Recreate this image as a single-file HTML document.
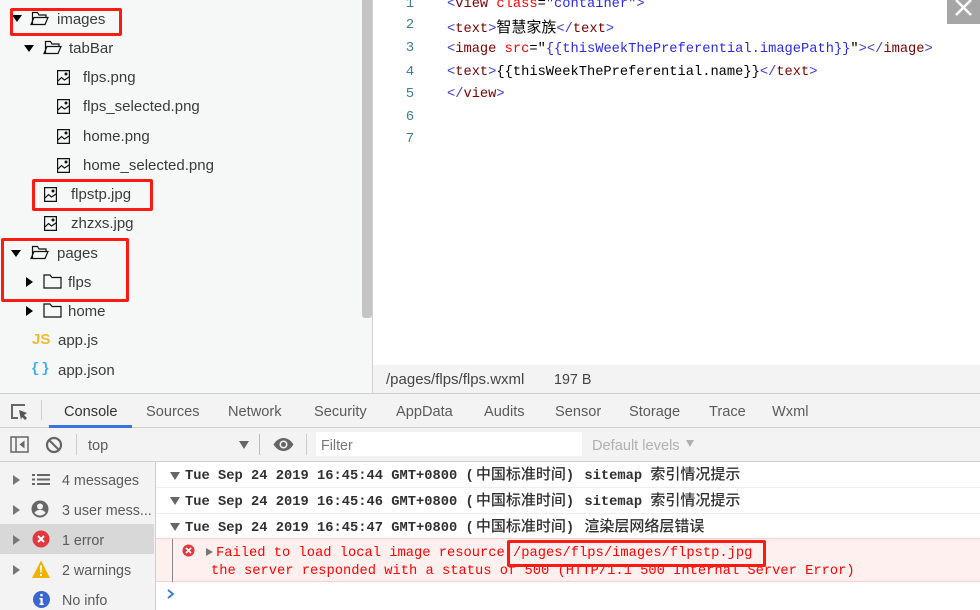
<!DOCTYPE html>
<html><head><meta charset="utf-8">
<style>
html,body{margin:0;padding:0}
body{width:980px;height:610px;position:relative;overflow:hidden;background:#fff;font-family:"Liberation Sans","Noto Sans CJK SC",sans-serif;color:#333}
.a{position:absolute}
.t{position:absolute;white-space:nowrap;font-size:15px;line-height:18px;color:#3a3a3a;margin-top:1px}
.tri{position:absolute;width:0;height:0}
.down{border-left:5.5px solid transparent;border-right:5.5px solid transparent;border-top:7px solid #000}
.right{border-top:5px solid transparent;border-bottom:5px solid transparent;border-left:7px solid #000}
.red{position:absolute;box-sizing:border-box;border:3px solid #fb1b12;border-radius:2px}
.c{position:absolute;white-space:pre;font-family:"Liberation Mono",monospace;font-size:13.72px;line-height:18px;height:18px;color:#7b0000}
.c .b{color:#3b3bd6}.c .r{color:#f00}.c .k{color:#000}.c .u{color:#2a2ae8}
.n{position:absolute;left:400px;width:20px;text-align:center;font-family:"Liberation Mono",monospace;font-size:14px;line-height:18px;color:#3f7f90}
.tab{position:absolute;top:403px;font-size:14.6px;line-height:18px;color:#5a5a5a;white-space:nowrap}
.l{position:absolute;white-space:nowrap;font-size:14.3px;line-height:18px;color:#5a5a5a;left:62px;margin-top:1px}
.g{position:absolute;left:13px;width:0;height:0;border-top:5px solid transparent;border-bottom:5px solid transparent;border-left:7px solid #777}
.m{position:absolute;left:185px;white-space:pre;font-family:"Liberation Mono","Noto Sans CJK SC",monospace;font-size:13.75px;line-height:18px;height:18px;font-weight:bold;color:#303030}
.m i{font-family:"Liberation Sans","Noto Sans CJK SC",sans-serif;font-style:normal;font-weight:500;font-size:15px}
.m i.f{margin-left:2px;margin-right:0}
.m b.p{margin-right:2px}
.d{position:absolute;left:170px;width:0;height:0;border-left:5px solid transparent;border-right:5px solid transparent;border-top:8px solid #666}
.e{position:absolute;white-space:pre;font-family:"Liberation Mono",monospace;font-size:13.75px;line-height:18px;color:#f00}
.hr{position:absolute;left:156px;right:0;height:1px;background:#eee}
.img{position:absolute}
</style></head><body>

<!-- left file tree -->
<div class="a" style="left:0;top:0;width:373px;height:393px;background:#f6f8f8"></div>
<div class="a" style="left:362px;top:0;width:10px;height:318px;background:#c4c4c4;border-radius:0 0 3px 3px"></div>
<div class="a" style="left:372px;top:0;width:1px;height:393px;background:#d0d0d0"></div>

<div class="tri down" style="left:12px;top:15px"></div>
<svg class="a" style="left:30px;top:11px" width="20" height="15" fill="none" stroke="#111" stroke-width="1.2"><path d="M2.5 13.5V1.5h5l1.5 2.5h7v2.5M1 13.5h14l3-7H4z"/></svg>
<div class="t" style="left:57px;top:10px">images</div>

<div class="tri down" style="left:24px;top:45px"></div>
<svg class="a" style="left:43px;top:40px" width="20" height="15" fill="none" stroke="#111" stroke-width="1.2"><path d="M2.5 13.5V1.5h5l1.5 2.5h7v2.5M1 13.5h14l3-7H4z"/></svg>
<div class="t" style="left:69px;top:39px">tabBar</div>

<svg class="img" style="left:57px;top:70px" width="13" height="15" fill="none" stroke="#111" stroke-width="1.2"><path d="M.6.6h11.800v13.800H.6zM1 11l3.500-3.500 3 2.500 4.500-3"/><circle cx="9" cy="4" r=".9" fill="#111"/></svg>
<div class="t" style="left:83px;top:68px">flps.png</div>
<svg class="img" style="left:57px;top:99px" width="13" height="15" fill="none" stroke="#111" stroke-width="1.2"><path d="M.6.6h11.800v13.800H.6zM1 11l3.500-3.500 3 2.500 4.500-3"/><circle cx="9" cy="4" r=".9" fill="#111"/></svg>
<div class="t" style="left:83px;top:97px">flps_selected.png</div>
<svg class="img" style="left:57px;top:129px" width="13" height="15" fill="none" stroke="#111" stroke-width="1.2"><path d="M.6.6h11.800v13.800H.6zM1 11l3.500-3.500 3 2.500 4.500-3"/><circle cx="9" cy="4" r=".9" fill="#111"/></svg>
<div class="t" style="left:83px;top:127px">home.png</div>
<svg class="img" style="left:57px;top:158px" width="13" height="15" fill="none" stroke="#111" stroke-width="1.2"><path d="M.6.6h11.800v13.800H.6zM1 11l3.500-3.500 3 2.500 4.500-3"/><circle cx="9" cy="4" r=".9" fill="#111"/></svg>
<div class="t" style="left:83px;top:156px">home_selected.png</div>
<svg class="img" style="left:44px;top:187px" width="13" height="15" fill="none" stroke="#111" stroke-width="1.2"><path d="M.6.6h11.800v13.800H.6zM1 11l3.500-3.500 3 2.500 4.500-3"/><circle cx="9" cy="4" r=".9" fill="#111"/></svg>
<div class="t" style="left:71px;top:185px">flpstp.jpg</div>
<svg class="img" style="left:44px;top:216px" width="13" height="15" fill="none" stroke="#111" stroke-width="1.2"><path d="M.6.6h11.800v13.800H.6zM1 11l3.500-3.500 3 2.500 4.500-3"/><circle cx="9" cy="4" r=".9" fill="#111"/></svg>
<div class="t" style="left:71px;top:214px">zhzxs.jpg</div>

<div class="tri down" style="left:11px;top:250px"></div>
<svg class="a" style="left:30px;top:245px" width="20" height="15" fill="none" stroke="#111" stroke-width="1.2"><path d="M2.500 13.500V1.500h5l1.500 2.500h7v2.500M1 13.500h14l3-7H4z"/></svg>
<div class="t" style="left:57px;top:244px">pages</div>

<div class="tri right" style="left:26px;top:277px"></div>
<svg class="a" style="left:43px;top:274px" width="19" height="15" fill="none" stroke="#111" stroke-width="1.2"><path d="M1 14V1h6l2 2.500h9V14z"/></svg>
<div class="t" style="left:68px;top:273px">flps</div>
<div class="tri right" style="left:26px;top:306px"></div>
<svg class="a" style="left:43px;top:303px" width="19" height="15" fill="none" stroke="#111" stroke-width="1.2"><path d="M1 14V1h6l2 2.500h9V14z"/></svg>
<div class="t" style="left:68px;top:302px">home</div>

<div class="a" style="left:32px;top:331px;font:bold 15px 'Liberation Sans',sans-serif;color:#f5b82e;line-height:18px;white-space:nowrap">JS</div>
<div class="t" style="left:58px;top:331px">app.js</div>
<div class="a" style="left:31px;top:360px;font:bold 14px 'Liberation Mono',monospace;color:#3fa9ee;line-height:18px;letter-spacing:0.5px;white-space:nowrap">{&#8202;}</div>
<div class="t" style="left:58px;top:361px">app.json</div>

<!-- red boxes left -->
<div class="red" style="left:10px;top:8px;width:112px;height:28px"></div>
<div class="red" style="left:32px;top:179px;width:121px;height:32px"></div>
<div class="red" style="left:1px;top:238px;width:128px;height:64px"></div>

<!-- editor -->
<div class="n" style="top:-5px">1</div>
<div class="n" style="top:16px">2</div>
<div class="n" style="top:39px">3</div>
<div class="n" style="top:63px">4</div>
<div class="n" style="top:85px">5</div>
<div class="n" style="top:108px">6</div>
<div class="n" style="top:130px">7</div>

<div class="c" style="left:447px;top:-4px"><span class="b">&lt;</span>view <span class="r">class</span><span class="k">=</span><span class="u">"container"</span><span class="b">&gt;</span></div>
<div class="c" style="left:447px;top:18px"><span class="b">&lt;</span>text<span class="b">&gt;</span><span class="k" style="font-family:'Noto Sans CJK SC',sans-serif;font-size:15px;line-height:18px">智慧家族</span><span class="b">&lt;/</span>text<span class="b">&gt;</span></div>
<div class="c" style="left:447px;top:41px"><span class="b">&lt;</span>image <span class="r">src</span><span class="k">=</span><span class="k">"</span><span class="u">{{thisWeekThePreferential.imagePath}}</span><span class="k">"</span><span class="b">&gt;&lt;/</span>image<span class="b">&gt;</span></div>
<div class="c" style="left:447px;top:64px"><span class="b">&lt;</span>text<span class="b">&gt;</span><span class="k">{{thisWeekThePreferential.name}}</span><span class="b">&lt;/</span>text<span class="b">&gt;</span></div>
<div class="c" style="left:447px;top:86px"><span class="b">&lt;/</span>view<span class="b">&gt;</span></div>

<!-- close button -->
<div class="a" style="left:947px;top:0;width:33px;height:24px;background:#a6a6a6"></div>
<svg class="a" style="left:947px;top:0" width="33" height="24" stroke="#fff" stroke-width="2.500"><path d="M9 0l15 15M24 0L9 15"/></svg>

<!-- status bar -->
<div class="a" style="left:373px;top:365px;width:607px;height:28px;background:#f3f3f3"></div>
<div class="a" style="left:386px;top:371px;font-size:15px;line-height:18px;color:#444;white-space:nowrap">/pages/flps/flps.wxml</div>
<div class="a" style="left:554px;top:371px;font-size:14.3px;line-height:18px;color:#444;white-space:nowrap">197 B</div>

<!-- devtools tabs -->
<div class="a" style="left:0;top:393px;width:980px;height:1px;background:#cfcfcf"></div>
<div class="a" style="left:0;top:394px;width:980px;height:33px;background:#f3f3f3"></div>
<div class="a" style="left:0;top:427px;width:980px;height:1px;background:#cfcfcf"></div>
<svg class="a" style="left:10px;top:403px" width="19" height="18" fill="none"><path d="M15 2H2v13h6" stroke="#666" stroke-width="2"/><path d="M9 7l8 3-3 2 3 3-2 2-3-3-1 3z" fill="#555"/></svg>
<div class="a" style="left:41px;top:400px;width:1px;height:20px;background:#ccc"></div>
<div class="tab" style="left:64px;color:#333">Console</div>
<div class="a" style="left:49px;top:425px;width:83px;height:3px;background:#3a73e0"></div>
<div class="tab" style="left:146px">Sources</div>
<div class="tab" style="left:228px">Network</div>
<div class="tab" style="left:314px">Security</div>
<div class="tab" style="left:396px">AppData</div>
<div class="tab" style="left:484px">Audits</div>
<div class="tab" style="left:555px">Sensor</div>
<div class="tab" style="left:629px">Storage</div>
<div class="tab" style="left:709px">Trace</div>
<div class="tab" style="left:772px">Wxml</div>

<!-- toolbar -->
<div class="a" style="left:0;top:428px;width:980px;height:33px;background:#f3f3f3"></div>
<div class="a" style="left:0;top:461px;width:980px;height:1px;background:#cfcfcf"></div>
<svg class="a" style="left:10px;top:436px" width="19" height="17" fill="none"><rect x="1" y="1" width="17" height="15" stroke="#666" stroke-width="1.500"/><path d="M6 1v15" stroke="#666" stroke-width="1.500"/><path d="M14.500 4.500v8l-5-4z" fill="#666"/></svg>
<svg class="a" style="left:45px;top:436px" width="18" height="18" fill="none" stroke="#666" stroke-width="2.200"><circle cx="9" cy="9" r="7"/><path d="M4 4l10 10"/></svg>
<div class="a" style="left:76px;top:434px;width:1px;height:21px;background:#ccc"></div>
<div class="a" style="left:88px;top:437px;font-size:14.6px;line-height:18px;color:#5a5a5a">top</div>
<div class="a" style="left:239px;top:441px;width:0;height:0;border-left:5px solid transparent;border-right:5px solid transparent;border-top:8px solid #666"></div>
<div class="a" style="left:259px;top:434px;width:1px;height:21px;background:#bbb"></div>
<svg class="a" style="left:273px;top:437px" width="21" height="15"><path d="M0.500 7.500C4 2 8 1 10.500 1S17 2 20.500 7.500C17 13 13 14 10.500 14S4 13 .5 7.500z" fill="#666"/><circle cx="10.500" cy="7.500" r="4" fill="#f3f3f3"/><circle cx="10.500" cy="7.500" r="2.500" fill="#666"/></svg>
<div class="a" style="left:306px;top:434px;width:1px;height:21px;background:#ccc"></div>
<div class="a" style="left:316px;top:432px;width:266px;height:24px;background:#fff"></div>
<div class="a" style="left:321px;top:437px;font-size:14.3px;line-height:18px;color:#777">Filter</div>
<div class="a" style="left:592px;top:437px;font-size:14.6px;line-height:18px;color:#b0b0b0;white-space:nowrap">Default levels</div>
<div class="a" style="left:686px;top:440px;width:0;height:0;border-left:4.500px solid transparent;border-right:4.500px solid transparent;border-top:7px solid #b0b0b0"></div>

<!-- console sidebar -->
<div class="a" style="left:0;top:462px;width:155px;height:148px;background:#f3f3f3"></div>
<div class="a" style="left:155px;top:462px;width:1px;height:148px;background:#cfcfcf"></div>
<div class="a" style="left:0;top:524px;width:154px;height:30px;background:#d8d8d8"></div>
<div class="g" style="top:475px"></div>
<div class="g" style="top:505px"></div>
<div class="g" style="top:535px"></div>
<div class="g" style="top:565px"></div>
<svg class="a" style="left:32px;top:474px" width="18" height="12" fill="#666"><path d="M0 0h3v2H0zM5 0h13v2H5zM0 4.500h3v2H0zM5 4.500h13v2H5zM0 9h3v2H0zM5 9h13v2H5z"/></svg>
<svg class="a" style="left:31px;top:500px" width="18" height="18"><circle cx="9" cy="9" r="8.500" fill="#666"/><circle cx="9" cy="6.500" r="3" fill="#f3f3f3"/><path d="M3.500 13c1-2.500 3.500-3 5.500-3s4.500.5 5.500 3c-1.500 1.500-3.500 2.500-5.500 2.500S5 14.500 3.500 13z" fill="#f3f3f3"/></svg>
<svg class="a" style="left:32px;top:530px" width="18" height="18"><circle cx="9" cy="9" r="8.500" fill="#e2383f"/><path d="M6 6l6 6M12 6l-6 6" stroke="#fff" stroke-width="2"/></svg>
<svg class="a" style="left:32px;top:560px" width="18" height="18"><path d="M9 0.500L18 18H0z" fill="#f0b400"/><path d="M8 5.500h2l-.3 7H8.300zM8 14h2v2H8z" fill="#fff"/></svg>
<svg class="a" style="left:33px;top:591px" width="17" height="17"><circle cx="8.500" cy="8.500" r="8.500" fill="#3a66d0"/><path d="M7.300 3h2.400v2.200H7.300zM6.500 7h3.200v5.500h1v1.500h-4.200v-1.500h1V8.500h-1z" fill="#fff"/></svg>
<div class="l" style="top:471px">4 messages</div>
<div class="l" style="top:501px">3 user mess...</div>
<div class="l" style="top:531px">1 error</div>
<div class="l" style="top:561px">2 warnings</div>
<div class="l" style="top:591px">No info</div>

<!-- console messages -->
<div class="d" style="left:170px;top:472px"></div>
<div class="m" style="top:466px">Tue Sep 24 2019 16:45:44 GMT+0800 (<i class="f">中国标准时间</i><b class="p">)</b> sitemap <i>索引情况提示</i></div>
<div class="hr" style="top:487px"></div>
<div class="d" style="left:170px;top:497px"></div>
<div class="m" style="top:492px">Tue Sep 24 2019 16:45:46 GMT+0800 (<i class="f">中国标准时间</i><b class="p">)</b> sitemap <i>索引情况提示</i></div>
<div class="hr" style="top:513px"></div>
<div class="d" style="left:170px;top:523px"></div>
<div class="m" style="top:518px">Tue Sep 24 2019 16:45:47 GMT+0800 (<i class="f">中国标准时间</i><b class="p">)</b> <i>渲染层网络层错误</i></div>

<div class="a" style="left:156px;top:538px;width:824px;height:44px;box-sizing:border-box;background:#fff0f0;border-top:1px solid #f8d0d0;border-bottom:1px solid #f8d0d0"></div>
<div class="a" style="left:172px;top:539px;width:1px;height:43px;background:#888"></div>
<svg class="a" style="left:182px;top:544px" width="13" height="13"><circle cx="6.500" cy="6.500" r="6" fill="#e2383f"/><path d="M4 4l5 5M9 4l-5 5" stroke="#fff" stroke-width="1.600"/></svg>
<div class="a" style="left:206px;top:548px;width:0;height:0;border-top:4.500px solid transparent;border-bottom:4.500px solid transparent;border-left:7px solid #777"></div>
<div class="e" style="left:216px;top:545px">Failed to load local image resource /pages/flps/images/flpstp.jpg</div>
<div class="e" style="left:211px;top:563px">the server responded with a status of 500 (HTTP/1.1 500 Internal Server Error)</div>
<div class="red" style="left:507px;top:540px;width:259px;height:27px"></div>

<svg class="a" style="left:166px;top:589px" width="10" height="10" fill="none" stroke="#3a73e0" stroke-width="1.800"><path d="M2 1l5 4-5 4"/></svg>

</body></html>
